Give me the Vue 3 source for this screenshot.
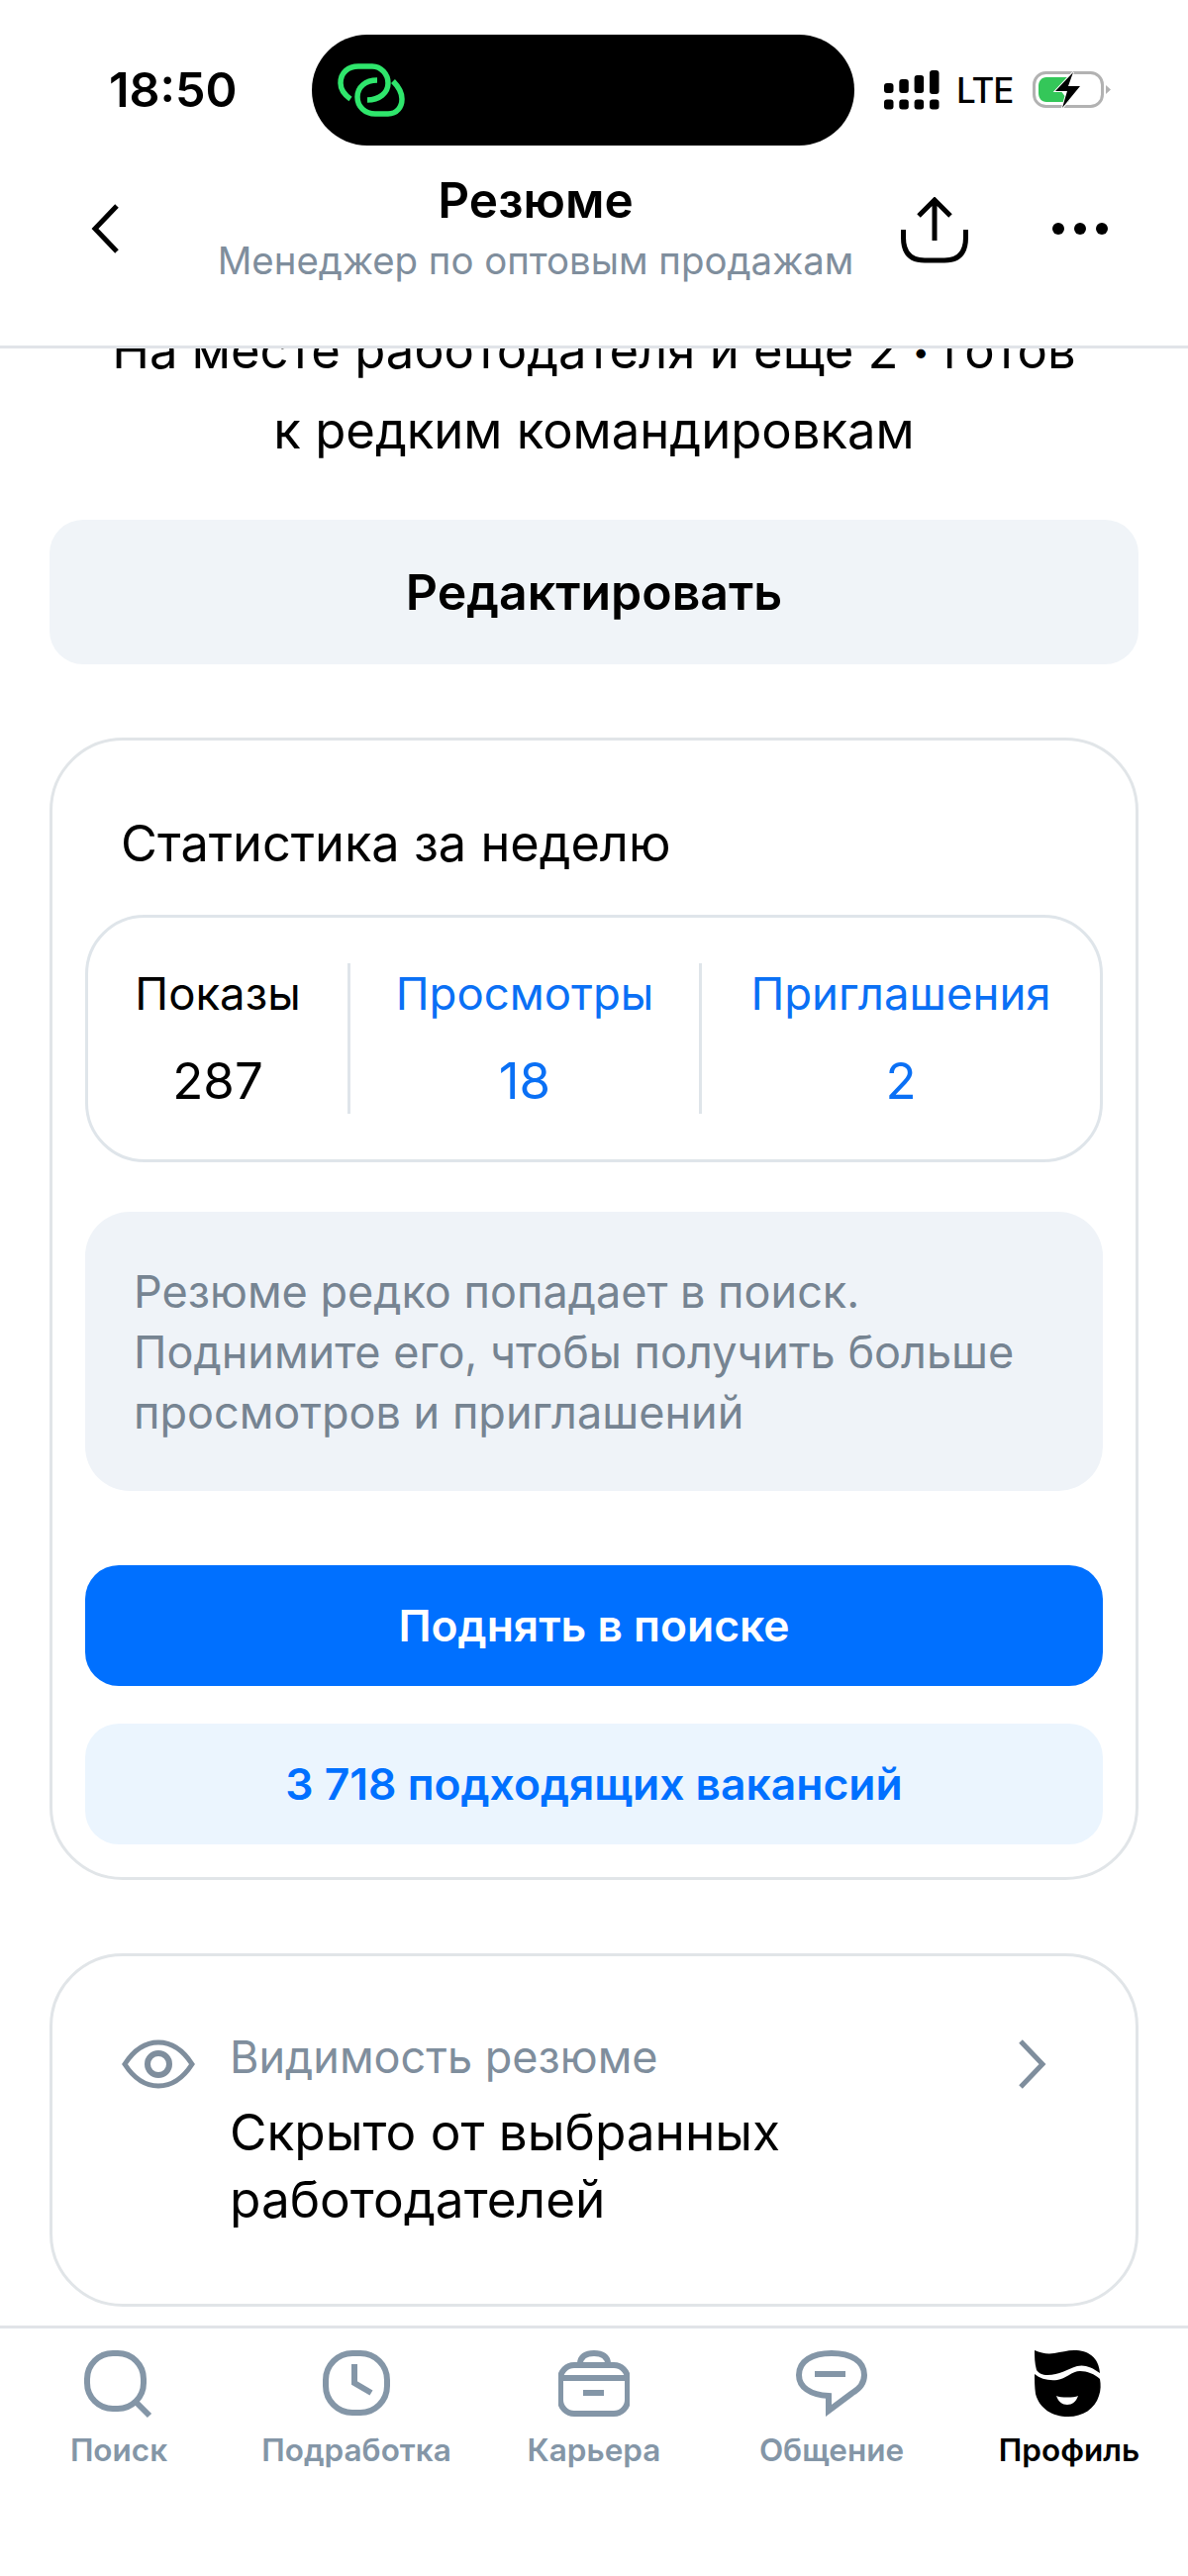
<script setup>
const stats = [
  { label: 'Показы', value: '287', accent: false },
  { label: 'Просмотры', value: '18', accent: true },
  { label: 'Приглашения', value: '2', accent: true },
]
</script>

<template>
  <div class="page">
    <header class="top">
      <div class="status">
        <div class="time">18:50</div>
        <div class="island">
          <svg class="link" width="68" height="54" viewBox="0 0 68 54" fill="none" stroke="#2fe66c" stroke-width="5.5" stroke-linecap="butt">
            <path d="M13 36C6 31 3 25 3 20 3 9 11 3 21 3L35 3C44 3 51 11 51 20 51 30 42 37 30 37" />
            <path d="M40 17C28 17 20 24 20 34 20 44 28 51 38 51L51 51C60 51 65 44 65 36 65 29 62 24 56 18" />
          </svg>
        </div>
        <div class="indicators">
          <svg width="57" height="40" viewBox="0 0 57 40" fill="#000">
            <rect x="0" y="13" width="9.5" height="10" rx="3" />
            <rect x="15.3" y="9" width="9.5" height="14" rx="3" />
            <rect x="30.6" y="5" width="9.5" height="18" rx="3" />
            <rect x="46" y="0" width="9.5" height="24" rx="3" />
            <rect x="0" y="29.5" width="9.5" height="10" rx="3" />
            <rect x="15.3" y="29.5" width="9.5" height="10" rx="3" />
            <rect x="30.6" y="29.5" width="9.5" height="10" rx="3" />
            <rect x="46" y="29.5" width="9.5" height="10" rx="3" />
          </svg>
          <span class="lte">LTE</span>
          <svg width="82" height="40" viewBox="0 0 82 40">
            <rect x="3.5" y="2.5" width="69" height="34" rx="12" fill="none" stroke="#b2b2b2" stroke-width="3" />
            <path d="M8 16C8 11 11 7 16 7L41 7 30 20 39 32 16 32C11 32 8 28 8 23Z" fill="#34c759" />
            <path d="M43 2L25 21 37 21 32 38 50 16 38 16Z" fill="#000" stroke="#fff" stroke-width="2" paint-order="stroke" />
            <path d="M76 15L81 19.5 76 24Z" fill="#b2b2b2" />
          </svg>
        </div>
      </div>
      <div class="nav-row">
        <button class="back" aria-label="Назад">
          <svg width="30" height="50" viewBox="0 0 30 50" fill="none" stroke="#000" stroke-width="5">
            <path d="M26 2L4 25 26 48" />
          </svg>
        </button>
        <div class="titles">
          <div class="title">Резюме</div>
          <div class="subtitle">Менеджер по оптовым продажам</div>
        </div>
        <div class="actions">
          <svg class="share" width="68" height="68" viewBox="0 0 68 68" fill="none" stroke="#000" stroke-width="5">
            <path d="M34 44V3M18 19L34 3 50 19" />
            <path d="M2.500 33V41C2.500 57 10 64 24 64L44 64C58 64 65.500 57 65.500 41V33" />
          </svg>
          <svg width="56" height="14" viewBox="0 0 56 14" fill="#000">
            <circle cx="6" cy="7" r="6" />
            <circle cx="28" cy="7" r="6" />
            <circle cx="50" cy="7" r="6" />
          </svg>
        </div>
      </div>
    </header>

    <main class="scroll">
      <div class="content">
        <p class="schedule">На месте работодателя и еще 2 <span class="dot">•</span> готов<br />к редким командировкам</p>
        <button class="btn btn-edit">Редактировать</button>

        <section class="card stats-card">
          <h2 class="card-title">Статистика за неделю</h2>
          <div class="stats">
            <div v-for="s in stats" :key="s.label" class="stat" :class="{ accent: s.accent }">
              <div class="stat-label">{{ s.label }}</div>
              <div class="stat-value">{{ s.value }}</div>
            </div>
          </div>
          <p class="note">Резюме редко попадает в поиск.<br />Поднимите его, чтобы получить больше<br />просмотров и приглашений</p>
          <button class="btn btn-primary">Поднять в поиске</button>
          <button class="btn btn-light">3 718 подходящих вакансий</button>
        </section>

        <section class="card vis-card">
          <svg class="eye" width="74" height="50" viewBox="0 0 74 50" fill="none" stroke="#7f8e9d" stroke-width="5">
            <path d="M3 25C12 11 24 3 37 3 50 3 62 11 71 25 62 39 50 47 37 47 24 47 12 39 3 25Z" />
            <circle cx="37" cy="25" r="11" stroke-width="6" />
          </svg>
          <div class="vis-text">
            <div class="vis-label">Видимость резюме</div>
            <div class="vis-value">Скрыто от выбранных<br />работодателей</div>
          </div>
          <svg class="chev" width="30" height="50" viewBox="0 0 30 50" fill="none" stroke="#7f8e9d" stroke-width="5">
            <path d="M4 2L26 25 4 48" />
          </svg>
        </section>
      </div>
    </main>

    <nav class="tabs">
      <div class="tab">
        <svg width="72" height="72" viewBox="0 0 72 72" fill="none" stroke="#8496a7" stroke-width="6">
          <rect x="4" y="5" width="57" height="56" rx="26" />
          <path d="M54 55L67 68" />
        </svg>
        <span>Поиск</span>
      </div>
      <div class="tab">
        <svg width="72" height="72" viewBox="0 0 72 72" fill="none" stroke="#8496a7" stroke-width="6">
          <rect x="5" y="5" width="62" height="60" rx="27" />
          <path d="M34 16V35L51 45" />
        </svg>
        <span>Подработка</span>
      </div>
      <div class="tab">
        <svg width="72" height="72" viewBox="0 0 72 72" fill="none" stroke="#8496a7" stroke-width="6">
          <rect x="2" y="17" width="68" height="49" rx="14" />
          <path d="M2 30H70M22 16C22 8 28 5 36 5 44 5 50 8 50 16M25 45H46" />
        </svg>
        <span>Карьера</span>
      </div>
      <div class="tab">
        <svg width="72" height="72" viewBox="0 0 72 72" fill="none" stroke="#8496a7" stroke-width="6">
          <path d="M33 48C14 47 3 39 3 27 3 13 16 5 36 5 56 5 69 13 69 27 69 35 64 41 57 45L33 63Z" />
          <path d="M19 26H50" />
        </svg>
        <span>Общение</span>
      </div>
      <div class="tab active">
        <svg width="72" height="72" viewBox="0 0 72 72">
          <path d="M1 2C8 5 14 6 21 5 28 4 34 2 41 2 55 2 66 9 67 25 59 19 51 16 44 18 34 21 26 27 14 27 9 27 5 25 3 22 1 15 1 8 1 2Z" fill="#000" />
          <path d="M1 26C7 31 15 33 24 32 32 31 39 23 47 23 54 23 62 26 67 31 68 37 68 42 66 48 62 61 50 69 35 69 19 69 6 61 2 46 1 39 1 32 1 26Z" fill="#000" />
          <path d="M23 48C27 50 41 50 45 48 43 54 39 57 34 57 29 57 25 54 23 48Z" fill="#fff" />
        </svg>
        <span>Профиль</span>
      </div>
    </nav>
  </div>
</template>

<style>
html, body { margin: 0; background: #fff; }
</style>

<style scoped>
* { box-sizing: border-box; }
.page {
  width: 1200px;
  height: 2602px;
  display: flex;
  flex-direction: column;
  overflow: hidden;
  background: #fff;
  color: #000;
  font-family: Inter, "Noto Sans", sans-serif;
}
.top {
  height: 352px;
  flex: none;
  border-bottom: 3px solid #e1e4e8;
  padding-top: 35px;
  background: #fff;
  position: relative;
  z-index: 1;
}
.status { display: flex; align-items: flex-start; padding-left: 110px; height: 112px; }
.time { width: 205px; font-size: 48.500px; font-weight: 600; line-height: 112px; }
.island {
  width: 548px;
  height: 112px;
  border-radius: 56px;
  background: #000;
  display: flex;
  align-items: center;
  padding-left: 26px;
}
.indicators { display: flex; align-items: center; margin-left: 30px; height: 112px; }
.lte { font-size: 35px; font-weight: 500; letter-spacing: -1px; margin: 0 18px 0 16px; line-height: 40px; }
.nav-row { display: grid; grid-template-columns: 210px 662px 1fr; align-items: center; height: 112px; margin-top: 28px; }
.back { background: none; border: 0; padding: 0 0 0 92px; margin-top: -8px; text-align: left; display: flex; }
.titles { text-align: center; }
.title { font-size: 49.500px; font-weight: 600; line-height: 60px; margin-top: -3px; }
.subtitle { font-size: 38.400px; line-height: 63px; color: #7f8e9d; }
.actions { display: flex; align-items: center; gap: 85px; padding-left: 38px; margin-top: -9px; }
.share { margin-top: 5px; }
.scroll { flex: 1; min-height: 0; overflow: hidden; }
.content { padding: 0 50px; margin-top: -38px; }
.schedule { margin: 0; text-align: center; font-size: 50.800px; line-height: 80px; }
.dot { font-size: 30px; vertical-align: 6px; }
.btn {
  display: block;
  width: 100%;
  border: 0;
  font-family: inherit;
  font-weight: 600;
  text-align: center;
}
.btn-edit {
  height: 146px;
  margin-top: 50px;
  border-radius: 34px;
  background: #f0f4f8;
  font-size: 50px;
  color: #000;
}
.card { border: 3px solid #e1e5e8; border-radius: 74px; }
.stats-card { margin-top: 74px; height: 1154px; padding: 0 33px; }
.card-title { margin: 0; padding: 76px 0 0 36px; font-size: 50.500px; font-weight: 400; line-height: 56px; }
.stats {
  display: grid;
  grid-template-columns: 262px 355px 1fr;
  height: 250px;
  margin-top: 44px;
  padding: 46px 0;
  border: 3px solid #dfe5ea;
  border-radius: 60px;
}
.stat { text-align: center; }
.stat + .stat { border-left: 3px solid #dfe5ea; }
.stat-label { font-size: 45.500px; line-height: 54px; padding-top: 4px; }
.stat-value { font-size: 51px; line-height: 60px; margin-top: 31px; }
.accent { color: #0a70f5; }
.note {
  margin: 50px 0 0;
  height: 282px;
  padding: 50px 30px 0 49px;
  border-radius: 45px;
  background: #eff3f8;
  color: #768492;
  font-size: 45px;
  line-height: 61px;
}
.btn-primary {
  height: 122px;
  margin-top: 75px;
  border-radius: 34px;
  background: #0070ff;
  color: #fff;
  font-size: 44.400px;
}
.btn-light {
  height: 122px;
  margin-top: 38px;
  border-radius: 34px;
  background: #ebf5fe;
  color: #0070ff;
  font-size: 44.400px;
}
.vis-card {
  margin-top: 74px;
  height: 357px;
  display: flex;
  align-items: flex-start;
  padding: 84px 0 0 70px;
  position: relative;
}
.eye { flex: none; }
.vis-text { margin-left: 35px; margin-top: -12px; flex: 1; }
.vis-label { font-size: 45px; line-height: 60px; color: #7f8e9d; }
.vis-value { font-size: 51.300px; line-height: 68px; margin-top: 11px; }
.chev { flex: none; margin-right: 90px; }
.tabs {
  flex: none;
  height: 253px;
  border-top: 3px solid #e1e4e8;
  display: grid;
  grid-template-columns: repeat(5, 240px);
  padding-top: 20px;
}
.tab {
  display: flex;
  flex-direction: column;
  align-items: center;
  font-size: 31.500px;
  font-weight: 600;
  color: #8496a7;
  line-height: 40px;
  gap: 11px;
}
.tab.active { color: #000; }
</style>
